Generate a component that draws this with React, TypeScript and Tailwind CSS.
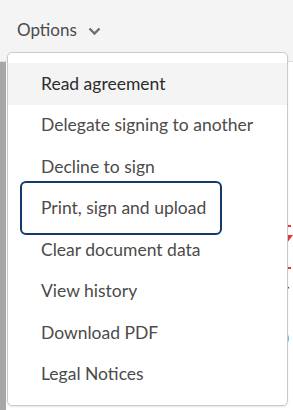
const items = [
  'Read agreement',
  'Delegate signing to another',
  'Decline to sign',
  'Print, sign and upload',
  'Clear document data',
  'View history',
  'Download PDF',
  'Legal Notices',
]

export default function App() {
  return (
    <div className="relative w-[293px] h-[410px] overflow-hidden bg-[#f4f4f4] font-['Lato',sans-serif]">
      <div className="h-[61px] flex items-center pl-[17px] pb-[2px]">
        <span className="text-[17px] text-[#4b4b4b]">Options</span>
        <svg width="13" height="9" viewBox="0 0 13 9" className="ml-[11px] mt-[3px]">
          <path d="M1.5 1.5 L6.5 6.5 L11.5 1.5" fill="none" stroke="#6e6e6e" strokeWidth="2.4" />
        </svg>
      </div>

      {/* document canvas, mostly hidden by the menu */}
      <div className="flex h-[349px] border-t border-[#dcdcdc]">
        <div className="w-[14px] bg-[#a7a7a7]" />
        <div className="flex-1 bg-white flex flex-col items-start pl-[275px] pt-[163px] text-[17px] text-[#333] leading-none">
          <div className="w-[10px] h-[2px] bg-[#e33]" />
          <div className="mt-[8px] w-0 h-0 border-l-[6px] border-r-[6px] border-t-[8px] border-l-transparent border-r-transparent border-t-[#e33]" />
          <div className="mt-[24px] w-[10px] h-[2px] bg-[#e33]" />
          <div className="mt-[16px] -ml-[2px]">T</div>
          <div className="mt-[28px] -ml-[2px]">0</div>
          <div className="mt-[22px] -ml-[2px]">l</div>
        </div>
      </div>

      {/* dropdown menu */}
      <div className="absolute left-[7px] top-[52px] w-[281px] rounded-[5px] border border-[#cacaca] bg-white py-[10px] shadow-[0_1px_2px_rgba(0,0,0,0.1)]">
        {items.map((label, i) => (
          <div
            key={label}
            className={
              i === 0
                ? 'h-[41.5px] flex items-center pl-[33px] bg-[#f4f4f4] text-[17.5px] text-[#2c2c2c]'
                : 'h-[41.5px] flex items-center pl-[33px] text-[17.5px] text-[#4b4b4b]'
            }
          >
            {i === 3 ? (
              <span className="relative">
                <span className="absolute -left-[21px] -right-[16px] -top-[14px] -bottom-[14px] rounded-[6px] border-2 border-[#14396b]" />
                {label}
              </span>
            ) : (
              label
            )}
          </div>
        ))}
      </div>
    </div>
  )
}
